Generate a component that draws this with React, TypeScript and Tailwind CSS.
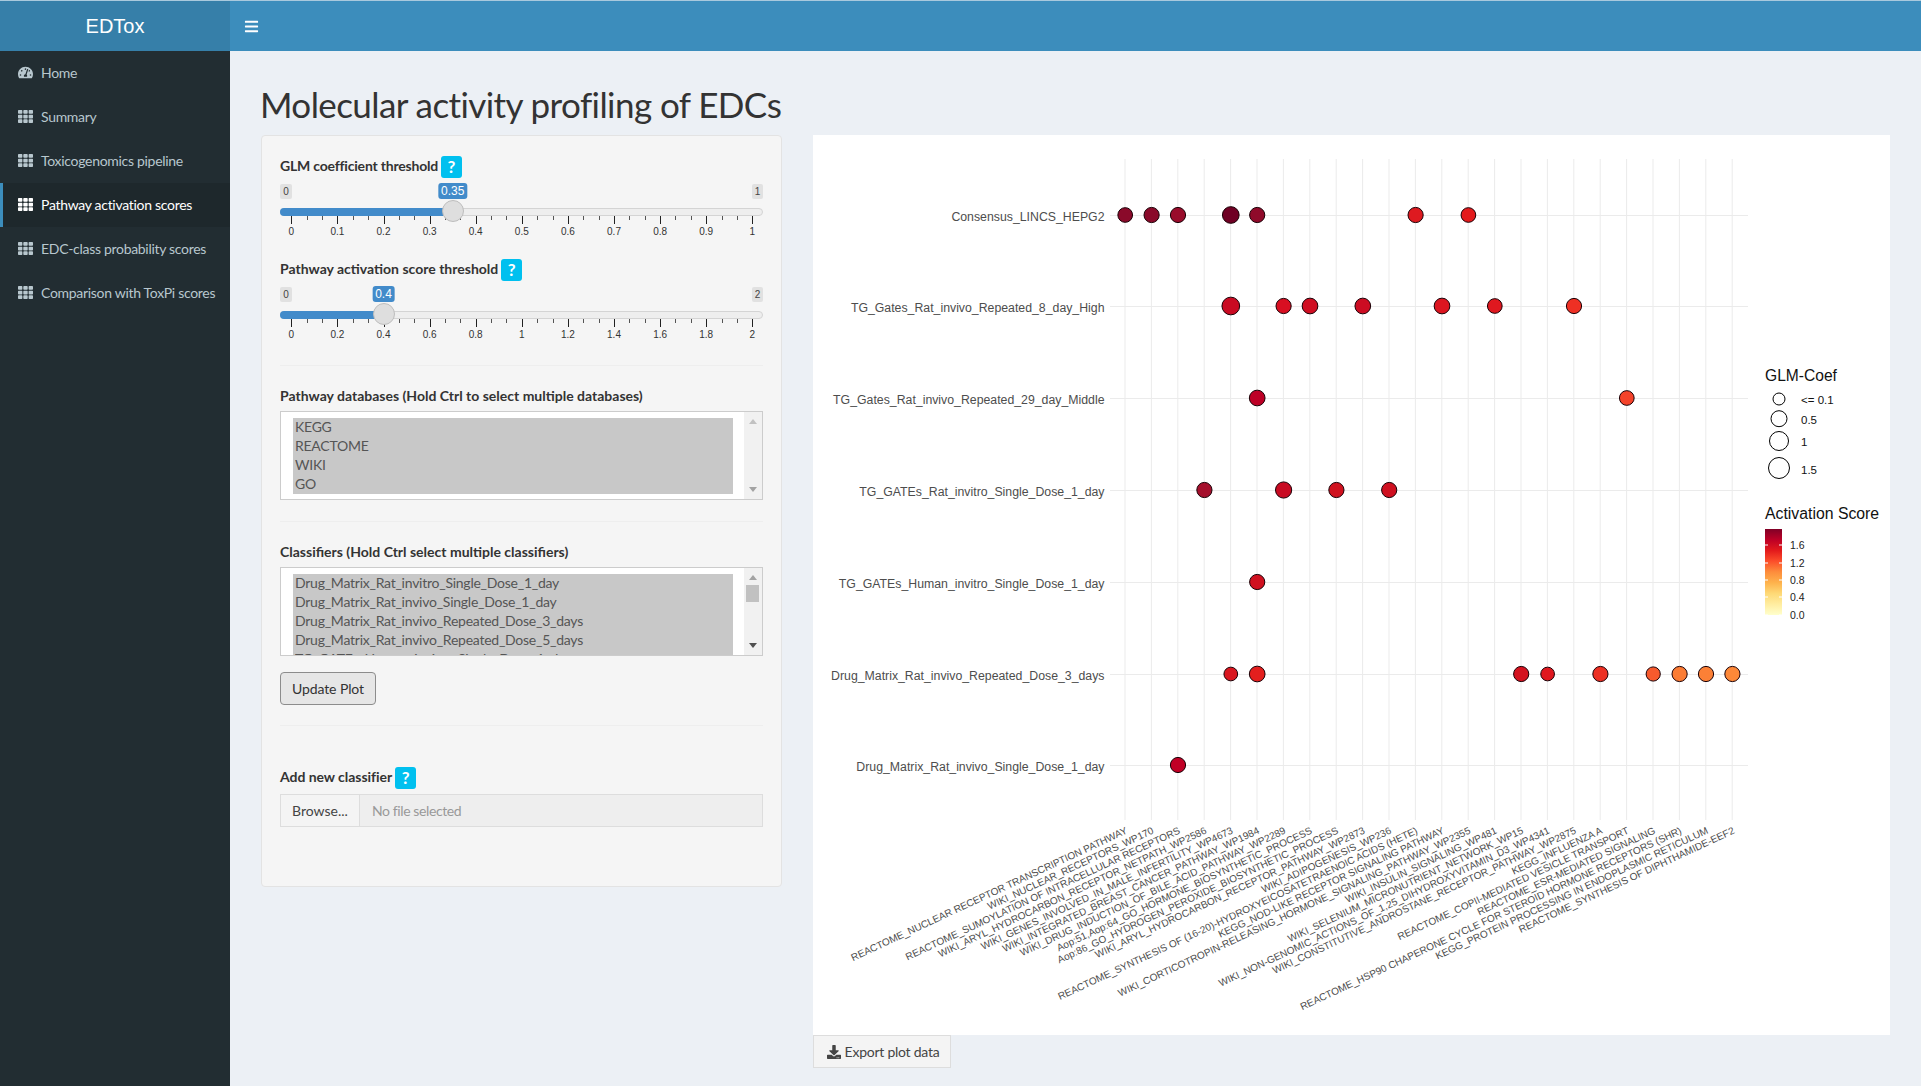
import React from 'react';
import { FaBars, FaDownload, FaTachometerAlt, FaTh } from 'react-icons/fa';

const NAV = ['Home', 'Summary', 'Toxicogenomics pipeline', 'Pathway activation scores', 'EDC-class probability scores', 'Comparison with ToxPi scores'];

const XL = [
  'REACTOME_NUCLEAR RECEPTOR TRANSCRIPTION PATHWAY', 'WIKI_NUCLEAR_RECEPTORS_WP170', 'REACTOME_SUMOYLATION OF INTRACELLULAR RECEPTORS',
  'WIKI_ARYL_HYDROCARBON_RECEPTOR_NETPATH_WP2586', 'WIKI_GENES_INVOLVED_IN_MALE_INFERTILITY_WP4673', 'WIKI_INTEGRATED_BREAST_CANCER_PATHWAY_WP1984',
  'WIKI_DRUG_INDUCTION_OF_BILE_ACID_PATHWAY_WP2289', 'Aop:51,Aop:64_GO_HORMONE_BIOSYNTHETIC_PROCESS', 'Aop:86_GO_HYDROGEN_PEROXIDE_BIOSYNTHETIC_PROCESS',
  'WIKI_ARYL_HYDROCARBON_RECEPTOR_PATHWAY_WP2873', 'WIKI_ADIPOGENESIS_WP236', 'REACTOME_SYNTHESIS OF (16-20)-HYDROXYEICOSATETRAENOIC ACIDS (HETE)',
  'KEGG_NOD-LIKE RECEPTOR SIGNALING PATHWAY', 'WIKI_CORTICOTROPIN-RELEASING_HORMONE_SIGNALING_PATHWAY_WP2355', 'WIKI_INSULIN_SIGNALING_WP481',
  'WIKI_SELENIUM_MICRONUTRIENT_NETWORK_WP15', 'WIKI_NON-GENOMIC_ACTIONS_OF_1,25_DIHYDROXYVITAMIN_D3_WP4341', 'WIKI_CONSTITUTIVE_ANDROSTANE_RECEPTOR_PATHWAY_WP2875',
  'KEGG_INFLUENZA A', 'REACTOME_COPII-MEDIATED VESICLE TRANSPORT', 'REACTOME_ESR-MEDIATED SIGNALING',
  'REACTOME_HSP90 CHAPERONE CYCLE FOR STEROID HORMONE RECEPTORS (SHR)', 'KEGG_PROTEIN PROCESSING IN ENDOPLASMIC RETICULUM', 'REACTOME_SYNTHESIS OF DIPHTHAMIDE-EEF2',
];

const ROWS: { label: string; y: number; dots: [number, number, string][] }[] = [
  { label: 'Consensus_LINCS_HEPG2', y: 215, dots: [[0, 15.5, '#8a0a2a'], [1, 16, '#8a0a2a'], [2, 16, '#990c2b'], [4, 17.5, '#6f0024'], [5, 16, '#8f0a2a'], [11, 16, '#de1a20'], [13, 15.5, '#e31a1c']] },
  { label: 'TG_Gates_Rat_invivo_Repeated_8_day_High', y: 306, dots: [[4, 18.5, '#c90a22'], [6, 16, '#d80f21'], [7, 16.5, '#d00e22'], [9, 16.5, '#cc0c22'], [12, 16.5, '#dc1520'], [14, 15.5, '#df181f'], [17, 16, '#ee3024']] },
  { label: 'TG_Gates_Rat_invivo_Repeated_29_day_Middle', y: 398, dots: [[5, 16.5, '#bd0026'], [19, 15.5, '#f4432a']] },
  { label: 'TG_GATEs_Rat_invitro_Single_Dose_1_day', y: 490, dots: [[3, 16, '#a50f2c'], [6, 17, '#c80a22'], [8, 16, '#d0121f'], [10, 16, '#cf1020']] },
  { label: 'TG_GATEs_Human_invitro_Single_Dose_1_day', y: 582, dots: [[5, 16, '#d0101f']] },
  { label: 'Drug_Matrix_Rat_invivo_Repeated_Dose_3_days', y: 674, dots: [[4, 14.5, '#d9161f'], [5, 16.5, '#e31f1e'], [15, 16, '#d4121f'], [16, 14.5, '#e0181f'], [18, 16, '#ed3023'], [20, 15, '#f75a2d'], [21, 16, '#fb7c34'], [22, 16, '#fc8036'], [23, 16, '#fd8838']] },
  { label: 'Drug_Matrix_Rat_invivo_Single_Dose_1_day', y: 765, dots: [[2, 16, '#c00025']] },
];

const gx = (i: number) => 1125 + 26.4 * i;

function Help() {
  return (
    <span className="ml-[3px] flex h-[22px] w-[21px] items-center justify-center rounded-[3px] bg-[#00c0ef] text-[17px] font-bold leading-none text-white">?</span>
  );
}

function Slider({ label, max, value, ticks, tight }: { label: string; max: number; value: number; ticks: string[]; tight?: boolean }) {
  const pos = (v: number) => 11.3 + (v / max) * 461;
  const minors: number[] = [];
  for (let i = 0; i < ticks.length - 1; i++) for (let j = 1; j < 3; j++) minors.push(11.3 + (i + j / 3) * 46.1);
  return (
    <div className="h-[103px]">
      <div className="flex h-[23px] items-center text-[14px] font-bold text-[#333]">
        <span className={tight ? 'pb-[3px] tracking-[-0.2px]' : 'pb-[3px]'}>{label}</span>
        <Help />
      </div>
      <div className="relative h-[80px] font-['Liberation_Sans',sans-serif]">
        <span className="absolute left-0 top-[6px] h-[15px] w-[12px] rounded-[2px] bg-[#e1e1e1] text-center text-[10px] leading-[15px] text-[#444]">0</span>
        <span className="absolute right-0 top-[6px] h-[15px] w-[11px] rounded-[2px] bg-[#e1e1e1] text-center text-[10px] leading-[15px] text-[#444]">{max}</span>
        <span className="absolute top-[30px] h-[8px] w-full rounded-[4px] border border-[#d4d4d4] bg-[#eeeeee]" />
        <span className="absolute left-0 top-[30px] h-[8px] rounded-l-[4px] bg-[#428bca]" style={{ width: pos(value) }} />
        <span className="absolute top-[5px] h-[16px] -translate-x-1/2 rounded-[3px] bg-[#428bca] px-[3px] text-[12px] leading-[16px] text-white" style={{ left: pos(value) }}>{value}</span>
        <span className="absolute top-[22px] z-10 h-[22px] w-[22px] -translate-x-1/2 rounded-full border border-[#bdbdbd] bg-[#dedede]" style={{ left: pos(value) }} />
        {minors.map((m) => (
          <span key={m} className="absolute top-[38px] h-[4px] w-px bg-[#555]" style={{ left: m }} />
        ))}
        {ticks.map((t, i) => (
          <React.Fragment key={t}>
            <span className="absolute top-[38px] h-[8px] w-px bg-[#222]" style={{ left: 11.3 + i * 46.1 }} />
            <span className="absolute top-[48px] -translate-x-1/2 text-[10px] leading-[12px] text-[#333]" style={{ left: 11.3 + i * 46.1 }}>{t}</span>
          </React.Fragment>
        ))}
      </div>
    </div>
  );
}

function ListBox({ items, thumb }: { items: string[]; thumb?: boolean }) {
  return (
    <div className="mt-[5px] flex h-[89px] w-full overflow-hidden border border-[#cccccc] bg-white">
      <div className="ml-[12px] mt-[6px] h-[200px] w-[440px]">
        {items.map((t) => (
          <div key={t} className="h-[19px] bg-[#c8c8c8] pl-[2px] text-[14px] leading-[18px] tracking-[-0.25px] text-[#555]">{t}</div>
        ))}
      </div>
      <div className="relative ml-auto h-full w-[18px] bg-[#f1f1f1]">
        <svg className="absolute left-[5px] top-[7px]" width="8" height="5" viewBox="0 0 8 5"><polygon points="4,0 8,5 0,5" fill={thumb ? '#a3a3a3' : '#c1c1c1'} /></svg>
        {thumb && <div className="absolute left-[2px] top-[17px] h-[17px] w-[13px] bg-[#c1c1c1]" />}
        <svg className="absolute bottom-[7px] left-[5px]" width="8" height="5" viewBox="0 0 8 5"><polygon points="0,0 8,0 4,5" fill={thumb ? '#505050' : '#a3a3a3'} /></svg>
      </div>
    </div>
  );
}

function Chart() {
  const sans = 'Liberation Sans, sans-serif';
  return (
    <svg className="block h-[900px] w-[1077px]" viewBox="813 135 1077 900" fontFamily={sans}>
      <defs>
        <linearGradient id="ylorrd" x1="0" y1="0" x2="0" y2="1">
          {['#800026', '#bd0026', '#e31a1c', '#fc4e2a', '#fd8d3c', '#feb24c', '#fed976', '#ffeda0', '#ffffcc'].map((c, i) => (
            <stop key={c} offset={`${(i / 8) * 100}%`} stopColor={c} />
          ))}
        </linearGradient>
      </defs>
      {XL.map((_, i) => (
        <line key={i} x1={gx(i)} x2={gx(i)} y1={159} y2={820} stroke="#ebebeb" />
      ))}
      {ROWS.map((r) => (
        <line key={r.label} x1={1110} x2={1748} y1={r.y + 0.5} y2={r.y + 0.5} stroke="#ebebeb" />
      ))}
      {ROWS.map((r) => (
        <g key={r.label}>
          <text x={1104.5} y={r.y + 6} textAnchor="end" fontSize={12.3} fill="#4d4d4d">{r.label}</text>
          {r.dots.map(([i, d, c]) => (
            <circle key={i} cx={gx(i) + 0.2} cy={r.y} r={d / 2 - 0.4} fill={c} stroke="#1a0006" strokeWidth={1} />
          ))}
        </g>
      ))}
      {XL.map((t, i) => (
        <text key={t} transform={`translate(${gx(i) + 3} 833) rotate(-25)`} textAnchor="end" fontSize={10.05} fill="#4d4d4d">{t}</text>
      ))}
      <text x={1765} y={381} fontSize={15.6} fill="#111">GLM-Coef</text>
      {[[399, 6, '<= 0.1', 399.5], [418.7, 8, '0.5', 420], [441, 9.5, '1', 442], [468, 10.5, '1.5', 470]].map(([cy, r, l, ty]) => (
        <g key={String(l)}>
          <circle cx={1779} cy={cy as number} r={r as number} fill="white" stroke="#000" />
          <text x={1801} y={(ty as number) + 4} fontSize={11.5} fill="#111">{l}</text>
        </g>
      ))}
      <text x={1765} y={519} fontSize={15.8} fill="#111">Activation Score</text>
      <rect x={1765} y={529} width={17} height={86} fill="url(#ylorrd)" />
      {[[545, '1.6'], [563, '1.2'], [580, '0.8'], [597, '0.4'], [615, '0.0']].map(([y, l]) => (
        <g key={String(l)}>
          <line x1={1765} x2={1768} y1={y as number} y2={y as number} stroke="white" />
          <line x1={1779} x2={1782} y1={y as number} y2={y as number} stroke="white" />
          <text x={1790} y={(y as number) + 4} fontSize={10.5} fill="#222">{l}</text>
        </g>
      ))}
    </svg>
  );
}

export default function App() {
  return (
    <div className="flex h-[1086px] w-[1921px] flex-col overflow-hidden bg-[#ecf0f5] font-[Lato,sans-serif]">
      <header className="flex h-[51px] shrink-0 border-t border-[#a9c9dd] bg-[#3c8dbc] text-white">
        <div className="flex w-[230px] items-center justify-center bg-[#367fa9] font-['Liberation_Sans',sans-serif] text-[20px]">EDTox</div>
        <div className="flex items-center pl-[14px]"><FaBars className="h-[15px] w-[15px]" /></div>
      </header>
      <div className="flex min-h-0 flex-1">
        <aside className="w-[230px] shrink-0 bg-[#222d32]">
          {NAV.map((n, i) => {
            const active = i === 3;
            return (
              <div key={n} className={active ? 'flex h-[44px] items-center border-l-[3px] border-[#3c8dbc] bg-[#1e282c] pb-[2px] pl-[15px] text-[14px] tracking-[-0.3px] text-white' : 'flex h-[44px] items-center pb-[2px] pl-[18px] text-[14px] tracking-[-0.3px] text-[#b8c7ce]'}>
                {i === 0 ? <FaTachometerAlt className="h-[15px] w-[15px] shrink-0" /> : <FaTh className="h-[15px] w-[15px] shrink-0" />}
                <span className="ml-[8px]">{n}</span>
              </div>
            );
          })}
        </aside>
        <main className="min-w-0 flex-1 px-[31px]">
          <h1 className="-ml-px flex h-[84px] items-center pt-[23px] text-[35px] font-normal tracking-[-0.58px] text-[#333]">Molecular activity profiling of EDCs</h1>
          <div className="grid grid-cols-[521px_1077px] items-start gap-x-[31px]">
            <section className="rounded-[4px] border border-[#e3e3e3] bg-[#f5f5f5] px-[18px] pb-[59px] pt-[19px]">
              <Slider tight label="GLM coefficient threshold" max={1} value={0.35} ticks={['0', '0.1', '0.2', '0.3', '0.4', '0.5', '0.6', '0.7', '0.8', '0.9', '1']} />
              <Slider label="Pathway activation score threshold" max={2} value={0.4} ticks={['0', '0.2', '0.4', '0.6', '0.8', '1', '1.2', '1.4', '1.6', '1.8', '2']} />
              <hr className="mt-[4px] border-[#eeeeee]" />
              <div className="mt-[20px] h-[20px] text-[14px] font-bold leading-[20px] text-[#333]">Pathway databases (Hold Ctrl to select multiple databases)</div>
              <ListBox items={['KEGG', 'REACTOME', 'WIKI', 'GO']} />
              <hr className="mt-[21px] border-[#eeeeee]" />
              <div className="mt-[20px] h-[20px] text-[14px] font-bold leading-[20px] text-[#333]">Classifiers (Hold Ctrl select multiple classifiers)</div>
              <ListBox thumb items={['Drug_Matrix_Rat_invitro_Single_Dose_1_day', 'Drug_Matrix_Rat_invivo_Single_Dose_1_day', 'Drug_Matrix_Rat_invivo_Repeated_Dose_3_days', 'Drug_Matrix_Rat_invivo_Repeated_Dose_5_days', 'TG_GATEs_Human_invitro_Single_Dose_1_day']} />
              <button className="mt-[16px] block h-[33px] w-[96px] rounded-[4px] border border-[#8c8c8c] bg-[#e6e6e6] text-[14px] tracking-[-0.1px] text-[#333]">Update Plot</button>
              <hr className="mt-[20px] border-[#eeeeee]" />
              <div className="mt-[40px] flex h-[23px] items-center text-[14px] font-bold text-[#333]"><span className="pb-[2px] tracking-[-0.05px]">Add new classifier</span><Help /></div>
              <div className="mt-[5px] flex h-[33px] border border-[#dddddd] text-[14px]">
                <div className="flex w-[79px] items-center justify-center border-r border-[#dddddd] bg-[#f4f4f4] text-[#444]">Browse...</div>
                <div className="flex flex-1 items-center bg-[#eeeeee] pl-[12px] tracking-[-0.4px] text-[#999]">No file selected</div>
              </div>
            </section>
            <div>
              <div className="bg-white"><Chart /></div>
              <button className="flex h-[33px] w-[138px] items-center justify-center gap-[4px] border border-[#dddddd] bg-[#f4f4f4] pl-[2px] text-[14px] tracking-[-0.25px] text-[#444]"><FaDownload className="h-[14px] w-[14px]" />Export plot data</button>
            </div>
          </div>
        </main>
      </div>
    </div>
  );
}
